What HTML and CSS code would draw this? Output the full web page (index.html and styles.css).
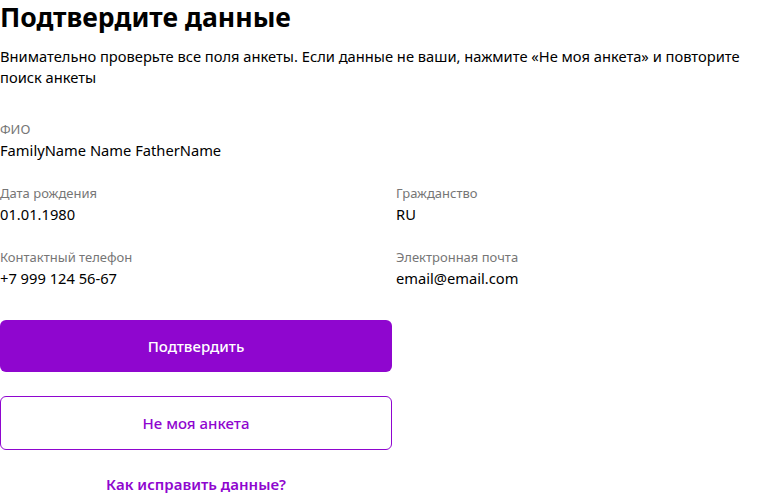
FILE: index.html
```html
<!DOCTYPE html>
<html lang="ru">
<head>
<meta charset="utf-8">
<link rel="stylesheet" href="styles.css">
</head>
<body>
<main class="page">
  <h1 class="title">Подтвердите данные</h1>
  <p class="lead">Внимательно проверьте все поля анкеты. Если данные не ваши, нажмите «Не моя анкета» и повторите поиск анкеты</p>
  <div class="fields">
    <div class="field full">
      <div class="label">ФИО</div>
      <div class="value">FamilyName Name FatherName</div>
    </div>
    <div class="field">
      <div class="label">Дата рождения</div>
      <div class="value">01.01.1980</div>
    </div>
    <div class="field">
      <div class="label">Гражданство</div>
      <div class="value">RU</div>
    </div>
    <div class="field">
      <div class="label">Контактный телефон</div>
      <div class="value">+7 999 124 56-67</div>
    </div>
    <div class="field">
      <div class="label">Электронная почта</div>
      <div class="value">email@email.com</div>
    </div>
  </div>
  <div class="actions">
    <button class="btn btn-primary">Подтвердить</button>
    <button class="btn btn-outline">Не моя анкета</button>
    <a class="link" href="#">Как исправить данные?</a>
  </div>
</main>
</body>
</html>
```
FILE: styles.css
```css
html, body {
  margin: 0;
  padding: 0;
  background: #fff;
}
body {
  font-family: "Noto Sans", "Open Sans", sans-serif;
  color: #000;
}
.page {
  width: 768px;
}
.title {
  margin: 0;
  font-size: 26.6px;
  line-height: 34px;
  font-weight: 700;
}
.lead {
  margin: 12px 0 0;
  font-size: 14.7px;
  line-height: 21px;
  max-width: 760px;
}
.fields {
  display: grid;
  grid-template-columns: 380px 1fr;
  column-gap: 16px;
  row-gap: 22px;
  margin-top: 31px;
}
.field.full {
  grid-column: 1 / -1;
}
.label {
  font-size: 13px;
  line-height: 20px;
  color: #767676;
}
.value {
  font-size: 14.7px;
  line-height: 22px;
}
.actions {
  display: flex;
  flex-direction: column;
  align-items: center;
  width: 392px;
  margin-top: 31px;
}
.btn {
  width: 100%;
  height: 52px;
  border-radius: 6px;
  font-family: inherit;
  font-size: 15px;
  font-weight: 500;
  cursor: pointer;
}
.btn-primary {
  background: #8f06cf;
  color: #fff;
  border: none;
}
.btn-outline {
  margin-top: 24px;
  height: 54px;
  background: #fff;
  color: #8f06cf;
  border: 1px solid #8f06cf;
}
.link {
  margin-top: 23px;
  font-size: 15px;
  line-height: 22px;
  font-weight: 600;
  color: #8f06cf;
  text-decoration: none;
}
```
